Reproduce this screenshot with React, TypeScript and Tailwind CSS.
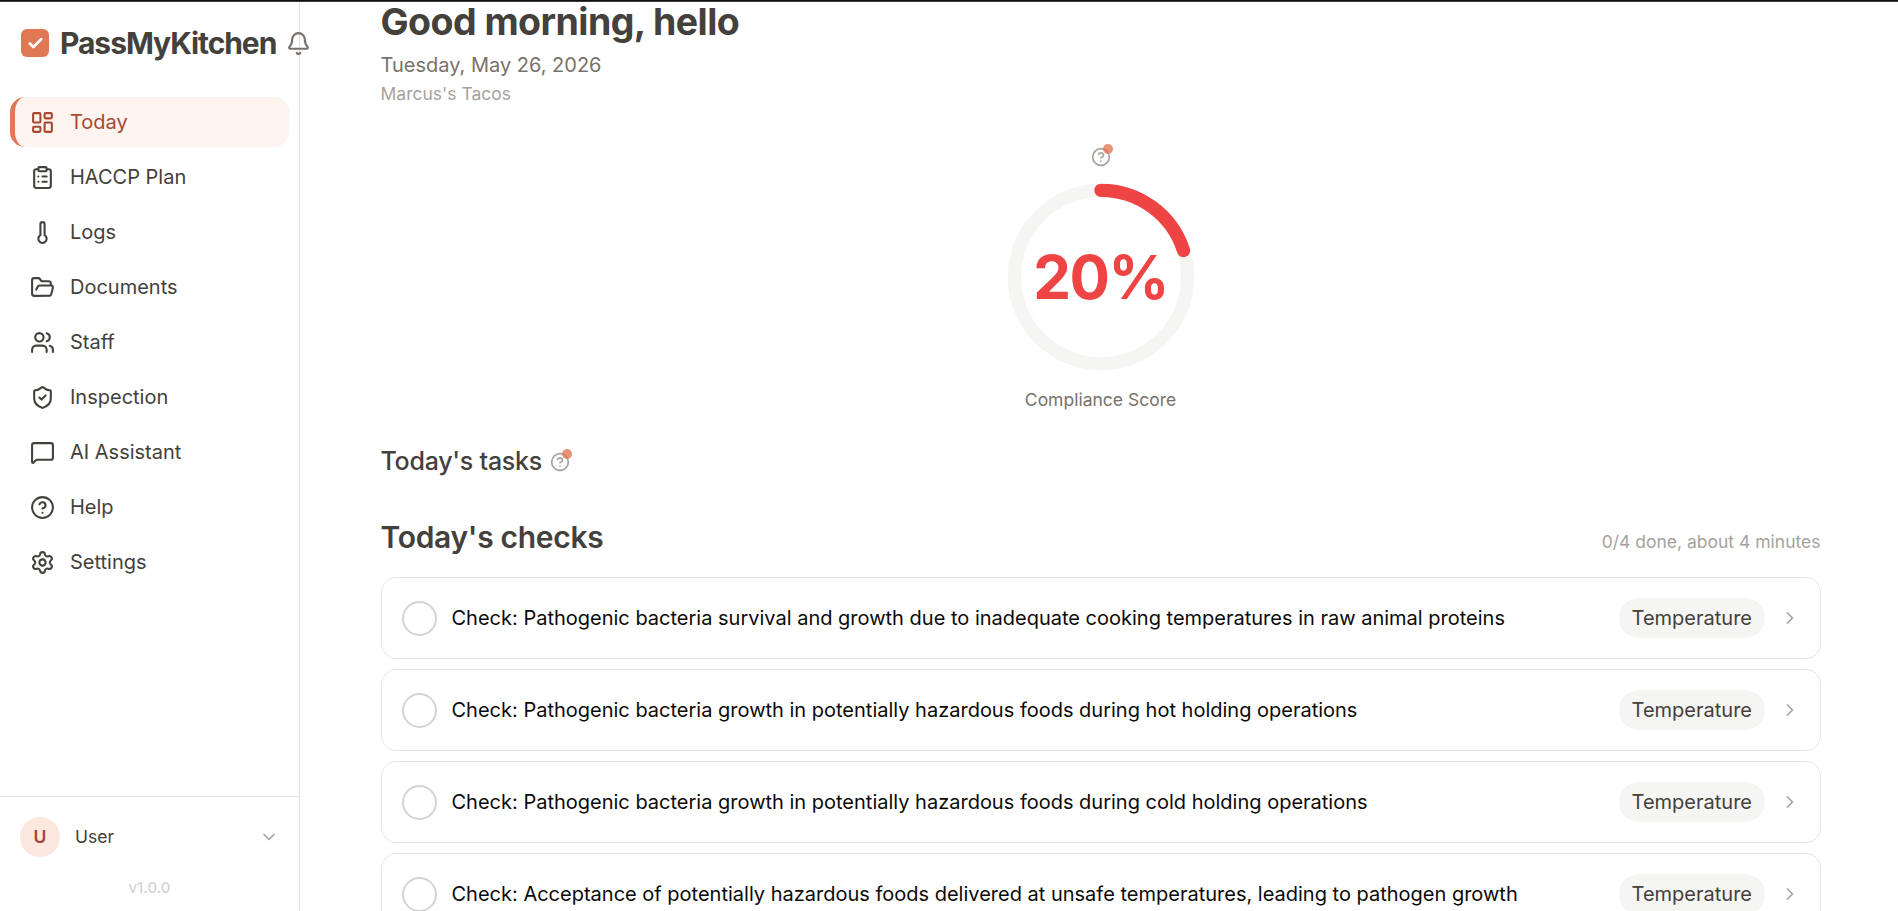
import {
  Bell,
  Check,
  ChevronDown,
  ChevronRight,
  CircleHelp,
  ClipboardList,
  FolderOpen,
  LayoutDashboard,
  MessageSquare,
  Settings,
  ShieldCheck,
  Thermometer,
  Users,
  type LucideIcon,
} from "lucide-react";
import { useState } from "react";

type NavItem = { label: string; icon: LucideIcon };

const NAV: NavItem[] = [
  { label: "Today", icon: LayoutDashboard },
  { label: "HACCP Plan", icon: ClipboardList },
  { label: "Logs", icon: Thermometer },
  { label: "Documents", icon: FolderOpen },
  { label: "Staff", icon: Users },
  { label: "Inspection", icon: ShieldCheck },
  { label: "AI Assistant", icon: MessageSquare },
  { label: "Help", icon: CircleHelp },
  { label: "Settings", icon: Settings },
];

const CHECKS = [
  "Check: Pathogenic bacteria survival and growth due to inadequate cooking temperatures in raw animal proteins",
  "Check: Pathogenic bacteria growth in potentially hazardous foods during hot holding operations",
  "Check: Pathogenic bacteria growth in potentially hazardous foods during cold holding operations",
  "Check: Acceptance of potentially hazardous foods delivered at unsafe temperatures, leading to pathogen growth",
];

export default function App() {
  const [active, setActive] = useState("Today");

  return (
    <div className="flex h-screen flex-col overflow-hidden bg-white font-['Inter',sans-serif] text-[20px] text-[#44403c]">
      <div className="h-[2px] shrink-0 border-b border-[#3a3a3c] bg-[#111113]" />
      <div className="flex min-h-0 flex-1">
        <Sidebar active={active} onSelect={setActive} />
        <main className="min-w-0 flex-1 pr-[77.5px] pl-[80.5px]">
          <h1 className="text-[37.5px] leading-[40px] font-bold tracking-[-0.55px]">
            Good morning, hello
          </h1>
          <p className="mt-2 leading-[30px] text-[#78716c]">Tuesday, May 26, 2026</p>
          <p className="text-[17.5px] leading-[27px] text-[#a8a29e]">Marcus&apos;s Tacos</p>

          <section className="mt-10 flex flex-col items-center">
            <HelpHint />
            <ScoreRing score={20} />
            <p className="mt-[10px] text-[17.5px] leading-[25px] text-[#78716c]">
              Compliance Score
            </p>
          </section>

          <div className="mt-8 flex items-center gap-2">
            <h2 className="text-[25px] leading-[35px] font-medium tracking-[-0.25px]">
              Today&apos;s tasks
            </h2>
            <HelpHint />
          </div>

          <div className="mt-[38px] flex items-baseline justify-between">
            <h2 className="text-[30px] leading-[40px] font-semibold tracking-[-0.3px]">
              Today&apos;s checks
            </h2>
            <p className="text-[17.5px] text-[#a8a29e]">0/4 done, about 4 minutes</p>
          </div>

          <ul className="mt-5 flex flex-col gap-[10px]">
            {CHECKS.map((title) => (
              <CheckRow key={title} title={title} />
            ))}
          </ul>
        </main>
      </div>
    </div>
  );
}

function Sidebar({
  active,
  onSelect,
}: {
  active: string;
  onSelect: (label: string) => void;
}) {
  return (
    <aside className="flex w-[300px] shrink-0 flex-col border-r border-[#e2e2e2]">
      <div className="flex h-[82px] shrink-0 items-center pl-[21px]">
        <div className="flex size-7 shrink-0 items-center justify-center rounded-md bg-[#e07856] pt-px text-white">
          <Check size={17} strokeWidth={3.8} />
        </div>
        <span className="ml-[11px] w-[217px] shrink-0 text-[30px] leading-none font-bold tracking-[-1.05px] whitespace-nowrap">
          PassMyKitchen
        </span>
        <Bell size={25} strokeWidth={2} className="ml-[9px] shrink-0 text-[#78716c]" />
      </div>

      <nav className="mt-[13px] flex flex-1 flex-col gap-[5px] px-[10px]">
        {NAV.map(({ label, icon: Icon }) => (
          <button
            key={label}
            onClick={() => onSelect(label)}
            className={
              label === active
                ? "flex h-[50px] items-center gap-[15px] rounded-[15px] border-l-[5px] border-[#e07856] bg-[#fdf3ef] pl-[15px] text-[#a84832]"
                : "flex h-[50px] items-center gap-[15px] rounded-[15px] pl-5"
            }
          >
            <Icon size={25} strokeWidth={2} />
            {label}
          </button>
        ))}
      </nav>

      <div className="h-[115px] shrink-0 border-t border-[#e2e2e2] px-5 pt-5">
        <div className="flex h-10 items-center">
          <div className="flex size-10 items-center justify-center rounded-full bg-[#fce8df] text-[17.5px] font-semibold text-[#a84040]">
            U
          </div>
          <span className="ml-[15px] flex-1 text-[17.5px]">User</span>
          <ChevronDown size={20} strokeWidth={2} className="text-[#a8a29e]" />
        </div>
        <p className="mt-[20px] text-center text-[15px] leading-[22px] font-medium text-[#d6d3d1]">
          v1.0.0
        </p>
      </div>
    </aside>
  );
}

// Question mark with the "not seen yet" dot in the corner
function HelpHint() {
  return (
    <span className="relative flex size-5">
      <CircleHelp size={20} strokeWidth={2} className="text-[#a8a29e]" />
      <span className="absolute -top-[3px] left-3 size-[10px] rounded-full bg-[#e07856] opacity-80" />
    </span>
  );
}

function ScoreRing({ score }: { score: number }) {
  const r = 52;
  const length = 2 * Math.PI * r;

  return (
    <div className="mt-[10px] grid size-[200px] place-items-center">
      <svg viewBox="0 0 120 120" className="col-start-1 row-start-1 size-[200px] -rotate-90">
        <circle cx="60" cy="60" r={r} fill="none" stroke="#f5f5f4" strokeWidth="8" />
        <circle
          cx="60"
          cy="60"
          r={r}
          fill="none"
          stroke="#ef4444"
          strokeWidth="8"
          strokeLinecap="round"
          strokeDasharray={length}
          strokeDashoffset={length * (1 - score / 100)}
        />
      </svg>
      <span className="col-start-1 row-start-1 text-[60px] leading-none font-bold tracking-[-0.025em] text-[#ef4444]">
        {score}%
      </span>
    </div>
  );
}

function CheckRow({ title }: { title: string }) {
  return (
    <li className="flex h-[82px] shrink-0 items-center rounded-[15px] border border-[#e5e5e5] px-5">
      <span className="size-[35px] shrink-0 rounded-full border-2 border-[#d6d3d1]" />
      <span className="ml-[15px] flex-1 text-[#0c0a09]">{title}</span>
      <span className="flex h-10 items-center rounded-full bg-[#f5f5f4] px-[12.5px]">
        Temperature
      </span>
      <ChevronRight size={20} strokeWidth={2} className="ml-[15px] text-[#a8a29e]" />
    </li>
  );
}
